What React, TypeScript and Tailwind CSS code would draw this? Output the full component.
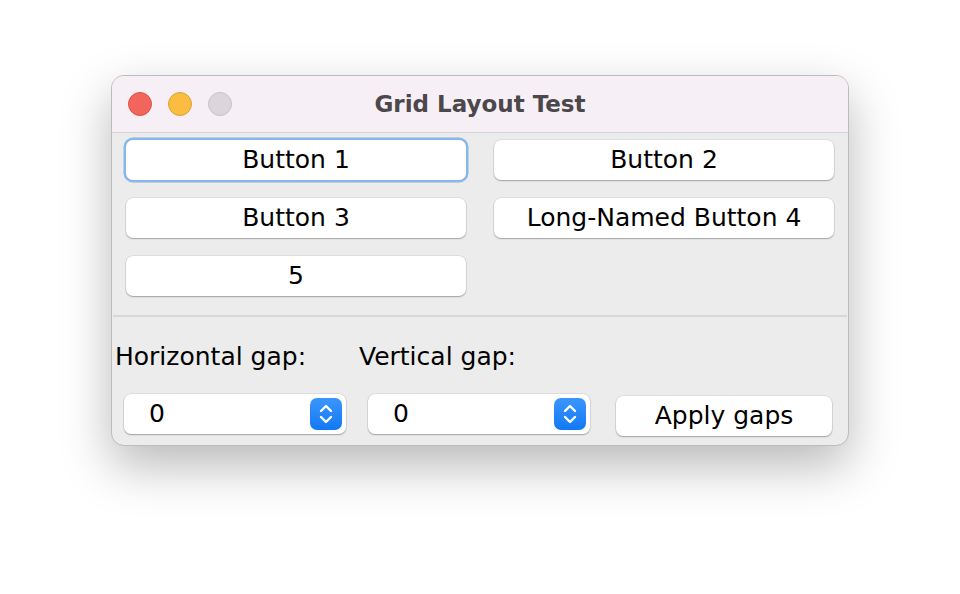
import React from "react";

const font = { fontFamily: '"DejaVu Sans", "Liberation Sans", sans-serif' };

function Btn({ label, focused }: { label: string; focused?: boolean }) {
  return (
    <div
      className={
        "h-[40px] rounded-[7px] bg-white flex items-center justify-center text-[25px] text-black " +
        (focused
          ? "shadow-[0_0_0_2.5px_#8ab6ea,0_1px_1px_rgba(0,0,0,0.2)]"
          : "shadow-[0_0_0_0.5px_rgba(0,0,0,0.12),0_1px_1.5px_rgba(0,0,0,0.28)]")
      }
    >
      {label}
    </div>
  );
}

function Stepper() {
  return (
    <div className="w-[32px] h-[32px] rounded-[7px] bg-gradient-to-b from-[#3a95fd] to-[#0f79f5] flex items-center justify-center">
      <svg width="16" height="24" viewBox="0 0 16 24" fill="none" stroke="white" strokeWidth="2.4" strokeLinecap="round" strokeLinejoin="round">
        <path d="M3 9 L8 4 L13 9" />
        <path d="M3 15 L8 20 L13 15" />
      </svg>
    </div>
  );
}

function Spinner() {
  return (
    <div className="w-[222px] h-[40px] rounded-[7px] bg-white flex items-center justify-between pl-[25px] pr-[4px] text-[25px] shadow-[0_0_0_0.5px_rgba(0,0,0,0.12),0_1px_1.5px_rgba(0,0,0,0.28)]">
      <span>0</span>
      <Stepper />
    </div>
  );
}

export default function App() {
  return (
    <div className="w-[960px] h-[594px] bg-white pt-[75px] pl-[111px]" style={font}>
      <div className="w-[738px] h-[371px] rounded-[13px] border border-[#bdbbbd] bg-[#ececec] overflow-hidden shadow-[0_20px_50px_rgba(0,0,0,0.28)] flex flex-col">
        <div className="h-[57px] shrink-0 bg-[#f6f0f6] border-b border-[#d6d2d6] flex items-center relative">
          <div className="flex items-center gap-[16px] pl-[16px]">
            <div className="w-[24px] h-[24px] rounded-full bg-[#f2655c] border border-[#dc5148]" />
            <div className="w-[24px] h-[24px] rounded-full bg-[#fbbd41] border border-[#dfa133]" />
            <div className="w-[24px] h-[24px] rounded-full bg-[#dcd6dc] border border-[#c7c1c7]" />
          </div>
          <div className="absolute inset-0 flex items-center justify-center text-[23px] font-bold text-[#4b474b] pointer-events-none">
            Grid Layout Test
          </div>
        </div>
        <div className="grid grid-cols-2 gap-x-[28px] gap-y-[18px] px-[14px] pt-[7px]">
          <Btn label="Button 1" focused />
          <Btn label="Button 2" />
          <Btn label="Button 3" />
          <Btn label="Long-Named Button 4" />
          <Btn label="5" />
        </div>
        <div className="mt-[19px] mx-[1px] h-[2px] bg-[#d8d8d8]" />
        <div className="flex pl-[3px] pt-[27px] text-[25px] text-black leading-none">
          <div className="w-[244px]">Horizontal gap:</div>
          <div>Vertical gap:</div>
        </div>
        <div className="flex items-center pl-[12px] pt-[23px] gap-[22px]">
          <Spinner />
          <Spinner />
          <div className="ml-[4px] mt-[4px] w-[216px] h-[40px] rounded-[7px] bg-white flex items-center justify-center text-[25px] shadow-[0_0_0_0.5px_rgba(0,0,0,0.12),0_1px_1.5px_rgba(0,0,0,0.28)]">
            Apply gaps
          </div>
        </div>
      </div>
    </div>
  );
}
